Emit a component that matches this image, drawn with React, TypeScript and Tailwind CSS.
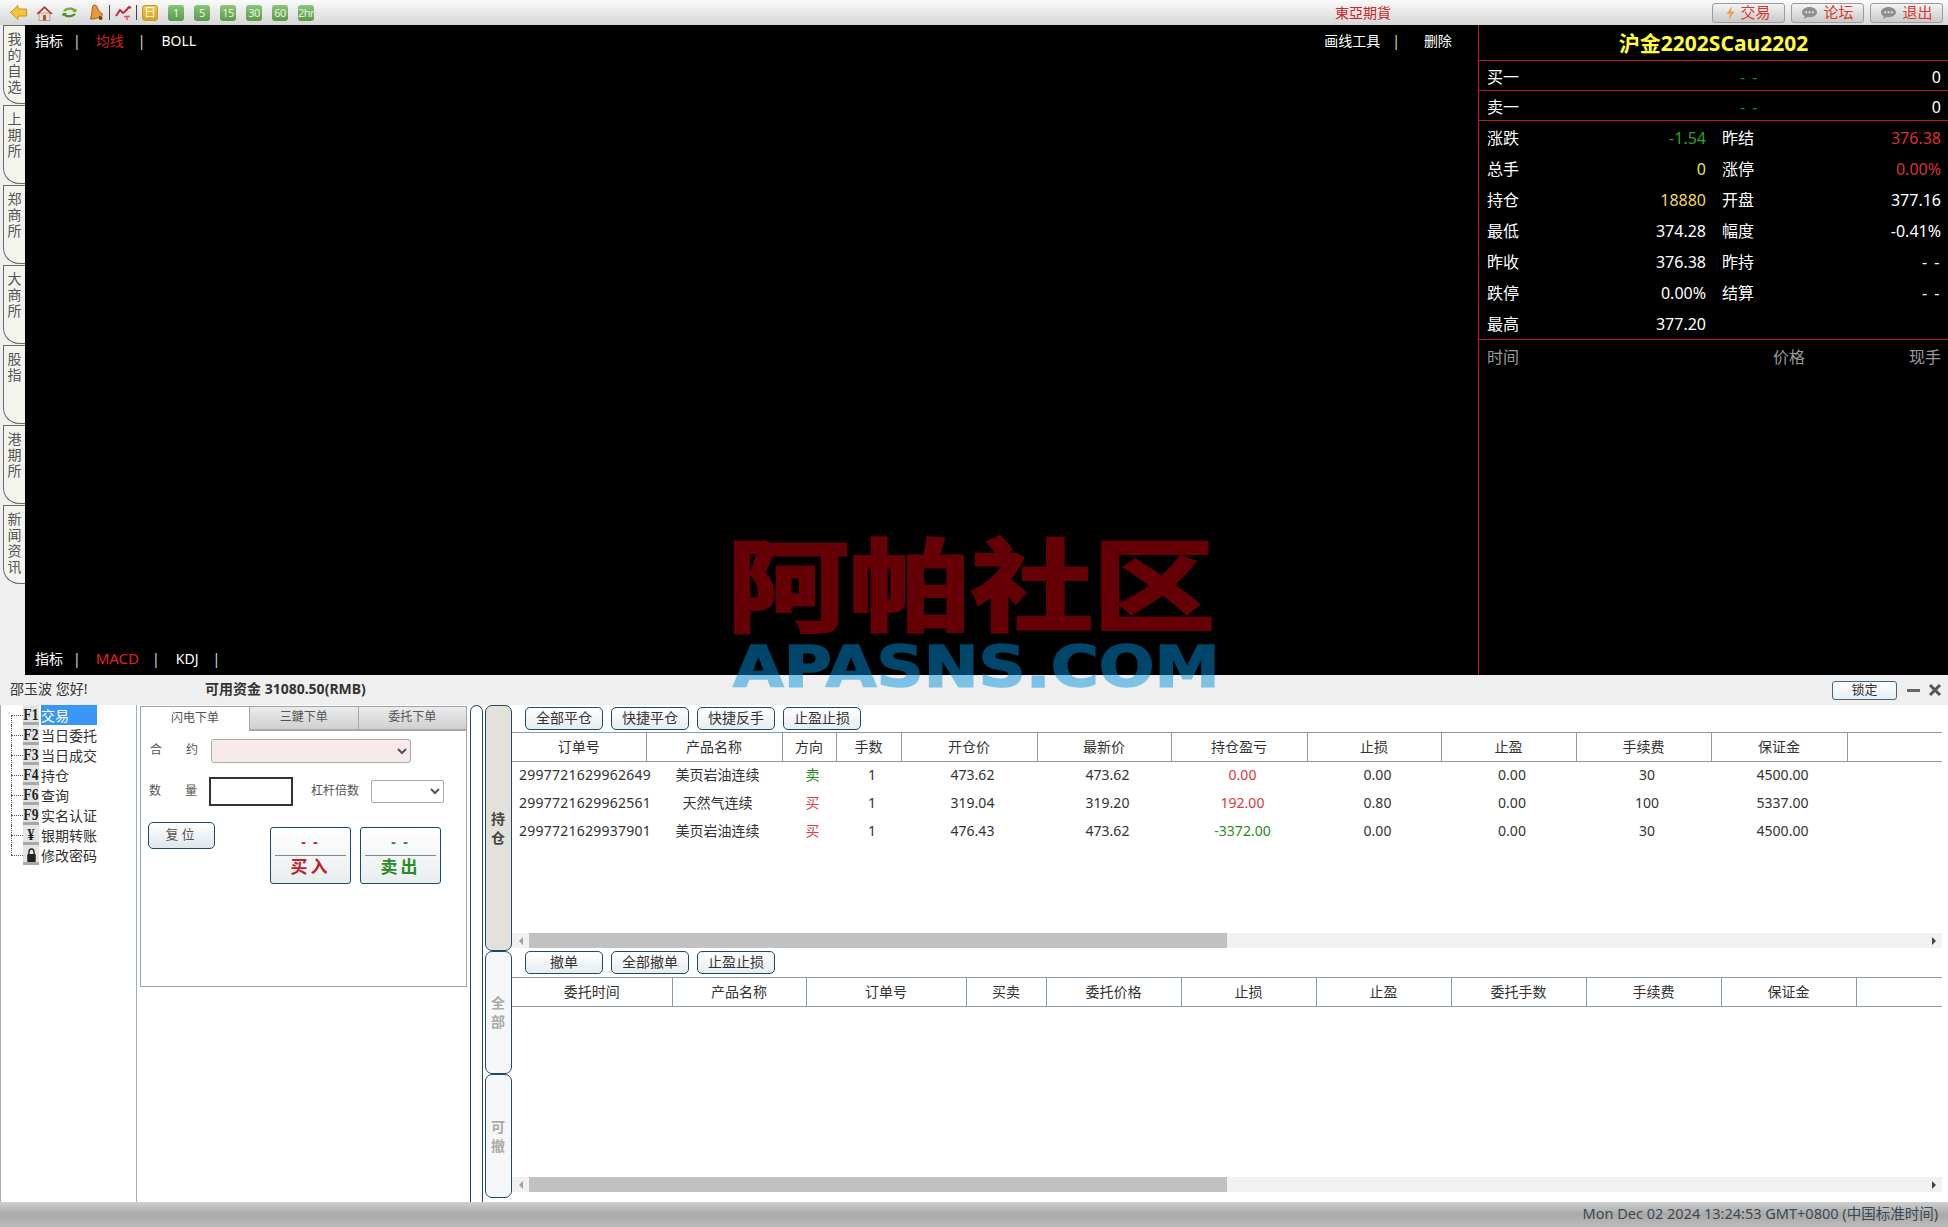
import type { ReactNode } from 'react';

const RAIL_TABS = ['我的自选', '上期所', '郑商所', '大商所', '股指', '港期所', '新闻资讯'];
const PERIODS = ['1', '5', '15', '30', '60', '2hr'];

const TREE = [
  { key: 'F1', label: '交易' },
  { key: 'F2', label: '当日委托' },
  { key: 'F3', label: '当日成交' },
  { key: 'F4', label: '持仓' },
  { key: 'F6', label: '查询' },
  { key: 'F9', label: '实名认证' },
  { key: '¥', label: '银期转账' },
  { key: 'lock', label: '修改密码' },
];

const QUOTE_ROWS = [
  { a: '涨跌', av: '-1.54', ac: 'text-[#2aa52a]', b: '昨结', bv: '376.38', bc: 'text-[#d93030]' },
  { a: '总手', av: '0', ac: 'text-[#eee060]', b: '涨停', bv: '0.00%', bc: 'text-[#d93030]' },
  { a: '持仓', av: '18880', ac: 'text-[#eed860]', b: '开盘', bv: '377.16', bc: 'text-white' },
  { a: '最低', av: '374.28', ac: 'text-white', b: '幅度', bv: '-0.41%', bc: 'text-white' },
  { a: '昨收', av: '376.38', ac: 'text-white', b: '昨持', bv: '- -', bc: 'text-white tracking-[1.5px]' },
  { a: '跌停', av: '0.00%', ac: 'text-white', b: '结算', bv: '- -', bc: 'text-white tracking-[1.5px]' },
  { a: '最高', av: '377.20', ac: 'text-white', b: '', bv: '', bc: 'text-white' },
];

const POSITION_COLS = [
  { label: '订单号', w: 'w-[134px]' },
  { label: '产品名称', w: 'w-[136px]' },
  { label: '方向', w: 'w-[54px]' },
  { label: '手数', w: 'w-[65px]' },
  { label: '开仓价', w: 'w-[136px]' },
  { label: '最新价', w: 'w-[134px]' },
  { label: '持仓盈亏', w: 'w-[136px]' },
  { label: '止损', w: 'w-[134px]' },
  { label: '止盈', w: 'w-[135px]' },
  { label: '手续费', w: 'w-[135px]' },
  { label: '保证金', w: 'w-[136px]' },
  { label: '', w: 'w-[95px]' },
];

const ORDER_COLS = [
  { label: '委托时间', w: 'w-[160px]' },
  { label: '产品名称', w: 'w-[134px]' },
  { label: '订单号', w: 'w-[160px]' },
  { label: '买卖', w: 'w-[80px]' },
  { label: '委托价格', w: 'w-[135px]' },
  { label: '止损', w: 'w-[135px]' },
  { label: '止盈', w: 'w-[135px]' },
  { label: '委托手数', w: 'w-[135px]' },
  { label: '手续费', w: 'w-[135px]' },
  { label: '保证金', w: 'w-[135px]' },
  { label: '', w: 'w-[86px]' },
];

const POSITIONS = [
  { id: '2997721629962649', name: '美页岩油连续', dir: '卖', dirC: 'text-[#2a8a2a]', open: '473.62', last: '473.62', pnl: '0.00', pnlC: 'text-[#d93a3a]', sl: '0.00', fee: '30', margin: '4500.00' },
  { id: '2997721629962561', name: '天然气连续', dir: '买', dirC: 'text-[#dc4050]', open: '319.04', last: '319.20', pnl: '192.00', pnlC: 'text-[#d93a3a]', sl: '0.80', fee: '100', margin: '5337.00' },
  { id: '2997721629937901', name: '美页岩油连续', dir: '买', dirC: 'text-[#dc4050]', open: '476.43', last: '473.62', pnl: '-3372.00', pnlC: 'text-[#2a8a2a]', sl: '0.00', fee: '30', margin: '4500.00' },
];

function BubbleIcon() {
  return (
    <svg width="17" height="14" viewBox="0 0 17 14" aria-hidden>
      <path d="M8.5 1C4.4 1 1 3.3 1 6.2c0 1.7 1.1 3.1 2.8 4L3 13l3.6-2c.6.1 1.2.2 1.9.2 4.1 0 7.5-2.3 7.5-5S12.600 1 8.500 1z" fill="#8f8f8f" />
      <circle cx="5.200" cy="6.200" r="1" fill="#eee" />
      <circle cx="8.500" cy="6.200" r="1" fill="#eee" />
      <circle cx="11.800" cy="6.200" r="1" fill="#eee" />
    </svg>
  );
}

function TopButton({ icon, label }: { icon: ReactNode; label: string }) {
  return (
    <div className="flex h-[20px] w-[73px] items-center justify-center gap-[5px] rounded-[3px] border border-[#9c9c9c] bg-gradient-to-b from-[#f4f4f4] to-[#c9c9c9] text-[15px] leading-none text-[#d8392e]">
      {icon}
      <span>{label}</span>
    </div>
  );
}

function Toolbar() {
  return (
    <div className="flex h-[25px] items-center bg-gradient-to-b from-[#fafafa] to-[#d6d6d6] pl-[10px]">
      {/* back */}
      <svg width="17" height="15" viewBox="0 0 17 15" className="mr-[9px]" aria-hidden>
        <path d="M0.500 7.500 8 0.500V4h8.500v7H8v3.500z" fill="#f3c53c" stroke="#d0921c" />
      </svg>
      {/* home */}
      <svg width="17" height="16" viewBox="0 0 17 16" className="mr-[9px]" aria-hidden>
        <path d="M3 8v7.500h11V8z" fill="#e9dfd2" stroke="#9a8a7a" strokeWidth="0.700" />
        <path d="M7 10h3v5.500H7z" fill="#b5502f" />
        <path d="M0.500 8.500 8.500 1l8 7.500-1.500 1-6.500-6-6.500 6z" fill="#b83a34" />
      </svg>
      {/* refresh */}
      <svg width="15" height="13" viewBox="0 0 15 13" className="mr-[11px]" aria-hidden>
        <path d="M1 5C3 1 11 .5 13 3.500l1.500-1V6H10l1.500-1C9.500 3.300 5 3.500 3.500 5.500z" fill="#6fae2e" />
        <path d="M14 8C12 12 4 12.500 2 9.500l-1.500 1V7H5L3.500 8c2 1.700 6.500 1.500 8-.5z" fill="#4f8f24" />
      </svg>
      {/* bell */}
      <svg width="16" height="17" viewBox="0 0 16 17" className="mr-[5px]" aria-hidden>
        <path d="M5 1.500c2-1 4 0 4.500 2 .6 2.500 2.500 5 5.500 7-3 3-8.500 5-12.500 4.500C4 11 3.500 6 5 1.500z" fill="#e59a35" stroke="#8a4d18" strokeWidth="0.800" />
        <circle cx="12.500" cy="14" r="2" fill="#7a3d18" />
      </svg>
      <div className="mr-[5px] h-[15px] w-px bg-[#444]" />
      {/* chart */}
      <svg width="17" height="16" viewBox="0 0 17 16" className="mr-[4px]" aria-hidden>
        <path d="M1 11 5 5l3 3 3-2.500 3-3.500 2 1" fill="none" stroke="#c8283a" strokeWidth="2" />
        <path d="M9 11.500h6M12 11.500V15" stroke="#d8555a" strokeWidth="1.500" />
      </svg>
      <div className="mr-[5px] h-[15px] w-px bg-[#444]" />
      <div className="mr-[10px] flex h-[16px] w-[16px] items-center justify-center rounded-[3px] border border-[#c89a20] bg-gradient-to-b from-[#eec95a] to-[#d49f22] text-[12px] leading-none text-[#fff6d8]">
        日
      </div>
      <div className="flex gap-[10px]">
        {PERIODS.map((p) => (
          <div
            key={p}
            className="flex h-[16px] w-[16px] items-center justify-center rounded-[3px] bg-gradient-to-b from-[#8cc47a] to-[#5a9a4c] text-[11px] leading-none tracking-[-0.5px] text-[#e6f4de]"
          >
            {p}
          </div>
        ))}
      </div>
      <div className="ml-[1021px] w-[56px] text-center text-[14px] leading-none whitespace-nowrap text-[#d0262a]">東亞期貨</div>
      <div className="ml-[321px] flex gap-[6px]">
        <TopButton
          label="交易"
          icon={
            <svg width="9" height="14" viewBox="0 0 9 14" aria-hidden>
              <path d="M6 0 .5 8H4l-1.500 6L8.500 5.500H5z" fill="#eda63a" />
            </svg>
          }
        />
        <TopButton label="论坛" icon={<BubbleIcon />} />
        <TopButton label="退出" icon={<BubbleIcon />} />
      </div>
    </div>
  );
}

function LeftRail() {
  return (
    <div className="flex w-[25px] shrink-0 flex-col bg-[#f0f0f0] pl-[3px]">
      {RAIL_TABS.map((t) => (
        <div
          key={t}
          className="mb-px flex h-[79px] w-[22px] flex-col items-center rounded-bl-[16px] border-t border-b border-l border-[#6a6a6a] bg-[#f4f4ee] pt-[5px] text-[14px] leading-[16px] text-[#555]"
        >
          {t.split('').map((c, i) => (
            <span key={i}>{c}</span>
          ))}
        </div>
      ))}
    </div>
  );
}

function Sep({ className }: { className: string }) {
  return <span className={`text-[14px] text-[#ddd] ${className}`}>|</span>;
}

function ChartArea() {
  return (
    <div className="flex flex-1 flex-col justify-between bg-black text-[14px] text-white">
      <div className="flex h-[31px] items-center pb-px pl-[10px]">
        <span>指标</span>
        <Sep className="ml-[10px]" />
        <span className="ml-[15px] text-[#d01f28]">均线</span>
        <Sep className="ml-[14px]" />
        <span className="ml-[16px]">BOLL</span>
        <span className="ml-[1128px]">画线工具</span>
        <Sep className="ml-[12px]" />
        <span className="ml-[24px]">删除</span>
      </div>
      <div className="flex h-[32px] items-center pb-[2px] pl-[10px]">
        <span>指标</span>
        <Sep className="ml-[10px]" />
        <span className="ml-[15px] text-[15px] text-[#e02020]">MACD</span>
        <Sep className="ml-[13px]" />
        <span className="ml-[16px]">KDJ</span>
        <Sep className="ml-[14px]" />
      </div>
    </div>
  );
}

function QuotePanel() {
  return (
    <div className="w-[470px] shrink-0 border-l border-[#b81c24] bg-black text-[16px] text-white">
      <div className="flex h-[36px] items-center justify-center border-b border-[#b81c24] pt-[3px] text-[21px] font-bold text-[#ffff33]">
        沪金2202SCau2202
      </div>
      {['买一', '卖一'].map((l) => (
        <div key={l} className="relative flex h-[30px] items-center justify-between border-b border-[#b81c24] pt-[3px] pr-[7px] pl-[8px]">
          <span>{l}</span>
          <span className="absolute left-[261px] tracking-[1.5px] text-[#1f8a1f]">- -</span>
          <span>0</span>
        </div>
      ))}
      <div className="border-b border-[#b81c24] pb-[1px]">
        {QUOTE_ROWS.map((r) => (
          <div key={r.a} className="grid h-[31px] grid-cols-2 items-center gap-x-[16px] pt-[3px] pr-[7px] pl-[8px]">
            <div className="flex justify-between">
              <span>{r.a}</span>
              <span className={r.ac}>{r.av}</span>
            </div>
            <div className="flex justify-between">
              <span>{r.b}</span>
              <span className={r.bc}>{r.bv}</span>
            </div>
          </div>
        ))}
      </div>
      <div className="flex h-[34px] items-center pr-[7px] pl-[8px] text-[#9a9a9a]">
        <span>时间</span>
        <span className="ml-[254px]">价格</span>
        <span className="ml-auto">现手</span>
      </div>
    </div>
  );
}

function TreeKey({ k }: { k: string }) {
  return (
    <div className="flex h-[20px] w-[16px] flex-col items-center bg-[#e4e4e4]">
      <div className="flex h-[17px] scale-x-[0.85] items-center justify-center pt-[2px] font-['Liberation_Serif',serif] text-[16px] leading-none font-bold text-[#222]">
        {k === 'lock' ? (
          <svg width="13" height="14" viewBox="0 0 12 14" aria-hidden>
            <path d="M3 6V4a3 3 0 0 1 6 0v2" fill="none" stroke="#222" strokeWidth="1.600" />
            <rect x="1" y="6" width="10" height="8" rx="1" fill="#222" />
          </svg>
        ) : (
          k
        )}
      </div>
      <div className="h-[3px] w-full bg-[#a8a8a8]" />
    </div>
  );
}

function TreePanel() {
  return (
    <div className="w-[137px] shrink-0 border-r border-l border-[#9fb0bd]">
      {TREE.map((item, i) => (
        <div key={item.key} className="flex h-[20px] items-center pl-[10px]">
          <div className="w-[12px]">
            <div className={`h-[10px] ${i > 0 ? 'border-l border-dotted border-[#555]' : ''}`} />
            <div className={`h-[10px] border-t border-dotted border-[#555] ${i < TREE.length - 1 ? 'border-l' : ''}`} />
          </div>
          <TreeKey k={item.key} />
          <div className={`ml-[2px] flex h-[20px] items-center text-[14px] ${i === 0 ? 'w-[56px] bg-[#3a97f5] text-white' : 'text-[#333]'}`}>
            {item.label}
          </div>
        </div>
      ))}
    </div>
  );
}

function TradeButton({ label, tone }: { label: string; tone: string }) {
  return (
    <div className="flex h-[57px] w-[81px] flex-col items-center rounded-[3px] border border-[#1f4a63] bg-gradient-to-b from-white to-[#e8eef0] px-[4px]">
      <div className={`flex h-[28px] w-full items-center justify-center border-b border-[#888] text-[14px] font-bold tracking-[2px] ${tone}`}>- -</div>
      <div className={`text-[17px] leading-[22px] font-bold tracking-[3px] ${tone}`}>{label}</div>
    </div>
  );
}

function OrderPanel() {
  return (
    <div className="mt-px ml-[3px] h-[281px] w-[327px] shrink-0 border border-[#9aa7b0] text-[12px] text-[#555]">
      <div className="flex h-[24px]">
        <div className="flex w-[108px] items-center justify-center pb-[2px]">闪电下单</div>
        {['三鍵下单', '委托下单'].map((t) => (
          <div key={t} className="flex flex-1 items-center justify-center border-b-2 border-l border-[#a8a8a8] bg-gradient-to-b from-[#ececec] to-[#d0d0d0] pb-[2px]">
            {t}
          </div>
        ))}
      </div>
      <div className="mt-[8px] flex h-[24px] items-center pl-[9px]">
        <span className="pb-[2px]">合</span>
        <span className="ml-[24px] pb-[2px]">约</span>
        <select className="ml-[13px] h-[24px] w-[200px] rounded-[3px] border border-[#aaa] bg-[#f8eaea]" />
      </div>
      <div className="mt-[14px] flex h-[29px] items-center pl-[8px]">
        <span className="pb-[2px]">数</span>
        <span className="ml-[24px] pb-[2px]">量</span>
        <input className="ml-[12px] h-[29px] w-[84px] border-2 border-[#333] bg-white" />
        <span className="ml-[18px] pb-[2px]">杠杆倍数</span>
        <select className="ml-[12px] h-[23px] w-[73px] rounded-[2px] border border-[#aaa] bg-white" />
      </div>
      <div className="mt-[16px] flex items-start pl-[7px]">
        <div className="flex h-[27px] w-[67px] items-center justify-center rounded-[5px] border border-[#1f4a63] bg-gradient-to-b from-white to-[#dfe7ec] pb-[2px] text-[13px] tracking-[3px]">
          复位
        </div>
        <div className="mt-[5px] ml-[55px] flex gap-[9px]">
          <TradeButton label="买入" tone="text-[#c0202a]" />
          <TradeButton label="卖出" tone="text-[#2a8a2a]" />
        </div>
      </div>
    </div>
  );
}

function ActionButton({ label }: { label: string }) {
  return (
    <div className="flex h-[23px] w-[78px] items-center justify-center rounded-[5px] border border-[#1f4a63] bg-gradient-to-b from-white to-[#e6ecf0] pb-[2px] text-[14px] leading-none text-[#333]">
      {label}
    </div>
  );
}

function SideTab({ label, active, className }: { label: string; active?: boolean; className: string }) {
  return (
    <div
      className={`flex w-[27px] flex-col items-center justify-center rounded-[7px] border border-[#1f4a63] pr-[1px] text-[14px] leading-[19px] font-bold ${
        active ? 'bg-[#e2e2da] text-[#444]' : 'bg-[#f6f7f8] text-[#aaa]'
      } ${className}`}
    >
      {label.split('').map((c, i) => (
        <span key={i}>{c}</span>
      ))}
    </div>
  );
}

function Scrollbar() {
  return (
    <div className="flex h-[15px] w-[1430px] items-center bg-[#f1f1f1]">
      <div className="ml-[7px] h-0 w-0 border-y-[4px] border-r-[4px] border-y-transparent border-r-[#a0a0a0]" />
      <div className="ml-[6px] h-full w-[698px] bg-[#c1c1c1]" />
      <div className="mr-[6px] ml-auto h-0 w-0 border-y-[4px] border-l-[4px] border-y-transparent border-l-[#444]" />
    </div>
  );
}

function HeaderTable({ cols, children }: { cols: { label: string; w: string }[]; children?: ReactNode }) {
  return (
    <table className="w-[1430px] table-fixed border-collapse text-[14px] text-[#333]">
      <colgroup>
        {cols.map((c, i) => (
          <col key={i} className={c.w} />
        ))}
      </colgroup>
      <thead>
        <tr className="h-[29px] border-y border-[#8b9aa5]">
          {cols.map((c, i) => (
            <th key={i} className={`pb-[2px] font-normal ${i < cols.length - 1 ? 'border-r border-[#8b9aa5]' : ''}`}>
              {c.label}
            </th>
          ))}
        </tr>
      </thead>
      {children}
    </table>
  );
}

function TradeTables() {
  return (
    <div className="flex w-[1436px] flex-col">
      <div className="h-[245px]">
        <div className="flex gap-[8px] pt-[2px] pl-[13px]">
          {['全部平仓', '快捷平仓', '快捷反手', '止盈止损'].map((l) => (
            <ActionButton key={l} label={l} />
          ))}
        </div>
        <div className="mt-[2px] h-[201px]">
          <HeaderTable cols={POSITION_COLS}>
            <tbody>
              {POSITIONS.map((p) => (
                <tr key={p.id} className="h-[28px] text-center [&>td]:pb-[2px] [&>td]:pl-[7px]">
                  <td className="tracking-[0.25px] whitespace-nowrap">{p.id}</td>
                  <td>{p.name}</td>
                  <td className={p.dirC}>{p.dir}</td>
                  <td>1</td>
                  <td>{p.open}</td>
                  <td>{p.last}</td>
                  <td className={p.pnlC}>{p.pnl}</td>
                  <td>{p.sl}</td>
                  <td>0.00</td>
                  <td>{p.fee}</td>
                  <td>{p.margin}</td>
                  <td />
                </tr>
              ))}
            </tbody>
          </HeaderTable>
        </div>
        <Scrollbar />
      </div>
      <div className="flex gap-[8px] pt-px pl-[13px]">
        {['撤单', '全部撤单', '止盈止损'].map((l) => (
          <ActionButton key={l} label={l} />
        ))}
      </div>
      <div className="mt-[3px] h-[200px]">
        <HeaderTable cols={ORDER_COLS} />
      </div>
      <Scrollbar />
    </div>
  );
}

function LowerPanel() {
  return (
    <div className="flex flex-col">
      <div className="flex h-[30px] items-center bg-[#efefef] text-[14px] text-[#333]">
        <span className="ml-[10px] w-[195px] pb-[3px]">邵玉波 您好!</span>
        <span className="pb-[3px] font-bold">可用资金 31080.50(RMB)</span>
        <div className="ml-auto flex h-[19px] w-[65px] items-center justify-center rounded-[3px] border border-[#3f6a85] bg-gradient-to-b from-white to-[#e8eef2] pb-px text-[13px]">
          锁定
        </div>
        <div className="ml-[10px] h-[3px] w-[13px] bg-[#666]" />
        <svg width="14" height="14" viewBox="0 0 14 14" className="mr-[6px] ml-[8px]" aria-hidden>
          <path d="M2 2l10 10M12 2 2 12" stroke="#555" strokeWidth="3" />
        </svg>
      </div>
      <div className="flex h-[497px] bg-white">
        <TreePanel />
        <OrderPanel />
        <div className="ml-[3px] w-[13px] rounded-t-[7px] border-x border-t border-[#1f4a63]" />
        <div className="ml-[2px] flex w-[27px] flex-col pb-[4px]">
          <SideTab label="持仓" active className="h-[246px]" />
          <SideTab label="全部" className="h-[124px]" />
          <SideTab label="可撤" className="h-[124px]" />
        </div>
        <TradeTables />
      </div>
      <div className="flex h-[25px] items-center justify-end bg-gradient-to-b from-[#cfcfcf] via-[#a9a9a9] to-[#bcbcbc] pr-[10px] pb-px text-[14.500px] text-[#3a4a55]">
        Mon Dec 02 2024 13:24:53 GMT+0800 (中国标准时间)
      </div>
    </div>
  );
}

function Watermark() {
  return (
    <div className="pointer-events-none absolute top-[524px] left-[727px] w-[490px]">
      <div className="h-[118px] w-[400px] origin-left scale-x-[1.22] text-[100px] leading-[120px] font-bold whitespace-nowrap text-[#640006] [-webkit-text-stroke:3px_#640006]">
        阿帕社区
      </div>
      <div className="ml-[6px] h-[50px] w-[428px] origin-left scale-x-[1.15] font-['DejaVu_Sans',sans-serif] text-[57px] leading-[50px] font-bold whitespace-nowrap text-[#0092df] opacity-[0.48] [-webkit-text-stroke:1.500px_#0092df]">
        APASNS.COM
      </div>
    </div>
  );
}

export default function App() {
  return (
    <div className="relative h-[1227px] w-[1948px] overflow-hidden bg-[#f0f0f0] font-['Noto_Sans','Noto_Sans_CJK_SC',sans-serif]">
      <Toolbar />
      <div className="flex h-[650px]">
        <LeftRail />
        <ChartArea />
        <QuotePanel />
      </div>
      <LowerPanel />
      <Watermark />
    </div>
  );
}
